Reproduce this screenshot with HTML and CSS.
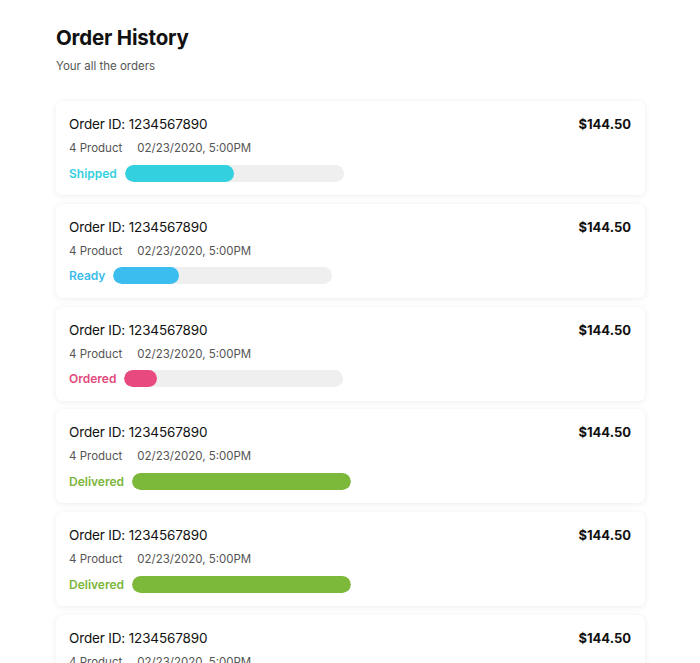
FILE: index.html
```html
<!DOCTYPE html>
<html lang="en">
<head>
<meta charset="utf-8">
<title>Order History</title>
<link rel="stylesheet" href="styles.css">
</head>
<body>
<main class="page">
  <header class="head">
    <h1 class="title">Order History</h1>
    <p class="subtitle">Your all the orders</p>
  </header>
  <section class="list">
    <article class="card">
      <div class="row"><span class="oid">Order ID: 1234567890</span><span class="price">$144.50</span></div>
      <div class="meta"><span>4 Product</span><span>02/23/2020, 5:00PM</span></div>
      <div class="status shipped"><span class="label">Shipped</span><span class="track"><span class="fill" style="width:50%"></span></span></div>
    </article>
    <article class="card">
      <div class="row"><span class="oid">Order ID: 1234567890</span><span class="price">$144.50</span></div>
      <div class="meta"><span>4 Product</span><span>02/23/2020, 5:00PM</span></div>
      <div class="status ready"><span class="label">Ready</span><span class="track"><span class="fill" style="width:30%"></span></span></div>
    </article>
    <article class="card">
      <div class="row"><span class="oid">Order ID: 1234567890</span><span class="price">$144.50</span></div>
      <div class="meta"><span>4 Product</span><span>02/23/2020, 5:00PM</span></div>
      <div class="status ordered"><span class="label">Ordered</span><span class="track"><span class="fill" style="width:15%"></span></span></div>
    </article>
    <article class="card">
      <div class="row"><span class="oid">Order ID: 1234567890</span><span class="price">$144.50</span></div>
      <div class="meta"><span>4 Product</span><span>02/23/2020, 5:00PM</span></div>
      <div class="status delivered"><span class="label">Delivered</span><span class="track"><span class="fill" style="width:100%"></span></span></div>
    </article>
    <article class="card">
      <div class="row"><span class="oid">Order ID: 1234567890</span><span class="price">$144.50</span></div>
      <div class="meta"><span>4 Product</span><span>02/23/2020, 5:00PM</span></div>
      <div class="status delivered"><span class="label">Delivered</span><span class="track"><span class="fill" style="width:100%"></span></span></div>
    </article>
    <article class="card">
      <div class="row"><span class="oid">Order ID: 1234567890</span><span class="price">$144.50</span></div>
      <div class="meta"><span>4 Product</span><span>02/23/2020, 5:00PM</span></div>
      <div class="status shipped"><span class="label">Shipped</span><span class="track"><span class="fill" style="width:50%"></span></span></div>
    </article>
  </section>
</main>
</body>
</html>
```

FILE: styles.css
```css
html, body {
  margin: 0;
  padding: 0;
  background: #ffffff;
}
body {
  font-family: "Inter", "Open Sans", "Liberation Sans", sans-serif;
  color: #111111;
  height: 663px;
  overflow: hidden;
}
.page {
  padding: 25px 55px 0 56px;
}
.head {
  margin: 0 0 28px 0;
}
.title {
  margin: 0;
  font-size: 20.5px;
  line-height: 26px;
  font-weight: 700;
  color: #111;
  letter-spacing: -0.2px;
}
.subtitle {
  margin: 8px 0 0 0;
  font-size: 11.5px;
  line-height: 14px;
  color: #555;
}
.list {
  display: flex;
  flex-direction: column;
  gap: 8.8px;
}
.card {
  background: #fff;
  border-radius: 6px;
  box-shadow: 0 1px 6px rgba(0, 0, 0, 0.07), 0 0 1px rgba(0, 0, 0, 0.04);
  padding: 14px 14px 13px 13px;
}
.row {
  display: flex;
  justify-content: space-between;
  align-items: baseline;
  font-size: 13.5px;
  line-height: 18px;
}
.oid {
  color: #111;
  letter-spacing: -0.15px;
}
.price {
  font-weight: 700;
  color: #111;
  font-size: 13px;
}
.meta {
  margin-top: 8px;
  display: flex;
  gap: 15px;
  font-size: 11.5px;
  line-height: 15px;
  color: #555;
}
.status {
  margin-top: 8px;
  display: flex;
  align-items: center;
  gap: 8px;
  height: 18px;
}
.label {
  font-size: 12px;
  font-weight: 600;
}
.track {
  width: 219px;
  height: 17px;
  border-radius: 9px;
  background: #efefef;
  display: block;
  overflow: hidden;
}
.fill {
  display: block;
  height: 100%;
  border-radius: 9px;
}
.shipped .label { color: #33cfdf; }
.shipped .fill { background: #33d1e0; }
.ready .label { color: #3bbcea; }
.ready .fill { background: #3bbdf0; }
.ordered .label { color: #e14a7c; }
.ordered .fill { background: #e84a7f; }
.delivered .label { color: #7ab63a; }
.delivered .fill { background: #7cb83a; }
```
